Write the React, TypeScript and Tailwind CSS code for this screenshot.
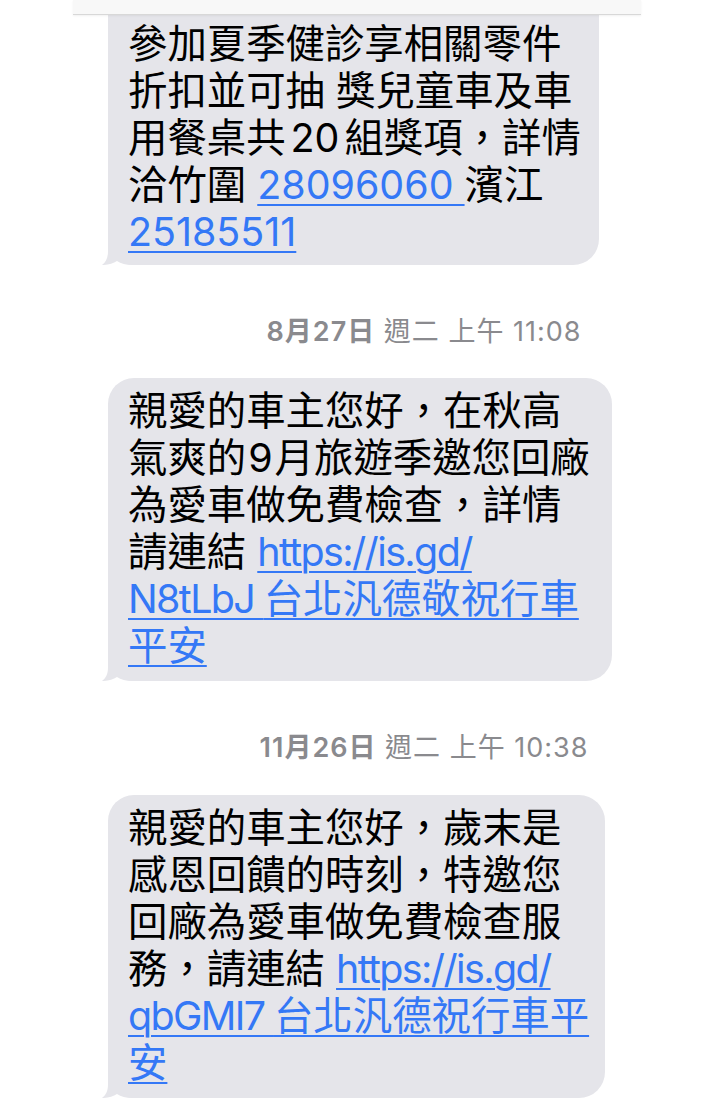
import React from "react";

const FONT = 'Inter, "Noto Sans CJK TC", "Noto Sans", sans-serif';

function Tail() {
  return (
    <svg
      className="absolute bottom-0 left-[-8px]"
      width="40"
      height="30"
      viewBox="0 0 40 30"
    >
      <path
        d="M8,0 L8,16 C8,23 6,27 2,30 C8,30.2 13,28.5 17,26 C21,28.8 26,30 32,30 L40,30 L40,0 Z"
        fill="#e5e5ea"
      />
    </svg>
  );
}

function L({ children }: { children: React.ReactNode }) {
  return (
    <span className="text-[#3478f6] underline decoration-[2px] underline-offset-[5px]">
      {children}
    </span>
  );
}

function T({ children }: { children: React.ReactNode }) {
  return <span className="tracking-[-1.6px]">{children}</span>;
}

function D({ children }: { children: React.ReactNode }) {
  return <span className="mx-[5px]">{children}</span>;
}

function D2({ children }: { children: React.ReactNode }) {
  return <span className="mx-[2px]">{children}</span>;
}

function Bubble({
  w,
  className,
  lines,
}: {
  w: string;
  className: string;
  lines: React.ReactNode[];
}) {
  return (
    <div className="pl-[108px]">
      <div
        className={`relative bg-[#e5e5ea] text-black text-[39.4px] leading-[47px] px-[20px] whitespace-nowrap ${w} ${className}`}
        style={{ fontFamily: FONT }}
      >
        <Tail />
        {lines.map((l, i) => (
          <div key={i} className="relative">
            {l}
          </div>
        ))}
      </div>
    </div>
  );
}

function Stamp({ date, rest }: { date: string; rest: string }) {
  return (
    <div
      className="pl-[128px] text-center text-[27px] leading-[32px] tracking-[1px] text-[#8a8a8e]"
      style={{ fontFamily: FONT }}
    >
      <span className="font-semibold">{date}</span>
      <span> {rest}</span>
    </div>
  );
}

export default function App() {
  return (
    <div className="w-[720px] h-[1099px] bg-white overflow-hidden flex flex-col">
      <div className="ml-[73px] w-[568px] h-[15px] bg-[#f8f8f8] border-b border-[#d8d8d8] shadow-[0_1px_2px_rgba(0,0,0,0.06)] relative z-10" />
      <Bubble
        w="w-[491px]"
        className="rounded-b-[26px] pt-[6px] pb-[9px]"
        lines={[
          "參加夏季健診享相關零件",
          "折扣並可抽 獎兒童車及車",
          <>
            用餐桌共<D>20</D>組獎項，詳情
          </>,
          <>
            洽竹圍 <L>28096060 </L>濱江
          </>,
          <L>25185511</L>,
        ]}
      />
      <div className="h-[51px]" />
      <Stamp date="8月27日" rest="週二 上午 11:08" />
      <div className="h-[30px]" />
      <Bubble
        w="w-[504px]"
        className="rounded-[26px] pt-[10px] pb-[11px]"
        lines={[
          "親愛的車主您好，在秋高",
          <>
            氣爽的<D2>9</D2>月旅遊季邀您回廠
          </>,
          "為愛車做免費檢查，詳情",
          <>
            請連結{" "}
            <L>
              <T>https://is.gd/</T>
            </L>
          </>,
          <L>
            <T>N8tLbJ </T>台北汎德敬祝行車
          </L>,
          <L>平安</L>,
        ]}
      />
      <div className="h-[51px]" />
      <Stamp date="11月26日" rest="週二 上午 10:38" />
      <div className="h-[31px]" />
      <Bubble
        w="w-[497px]"
        className="rounded-[26px] pt-[10px] pb-[11px]"
        lines={[
          "親愛的車主您好，歲末是",
          "感恩回饋的時刻，特邀您",
          "回廠為愛車做免費檢查服",
          <>
            務，請連結{" "}
            <L>
              <T>https://is.gd/</T>
            </L>
          </>,
          <L>
            <T>qbGMI7 </T>台北汎德祝行車平
          </L>,
          <L>安</L>,
        ]}
      />
    </div>
  );
}
